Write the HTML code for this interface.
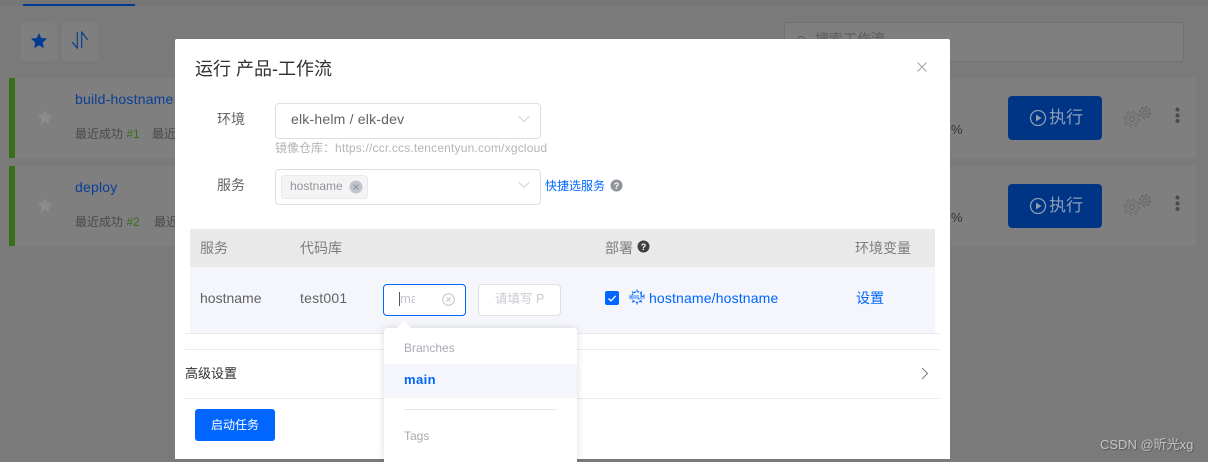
<!DOCTYPE html>
<html><head><meta charset="utf-8">
<style>
*{box-sizing:border-box}
html,body{margin:0;padding:0}
body{width:1208px;height:462px;overflow:hidden;position:relative;background:#7a7a7a;font-family:"Liberation Sans","Noto Sans CJK SC",sans-serif;font-size:14px}
.a{position:absolute;white-space:nowrap}
.card{position:absolute;left:9px;width:1187px;height:80px;background:#7f7f7f;border-left:6px solid #387018}
.btn{position:absolute;left:1008px;width:94px;height:44px;background:#003585;border-radius:4px;color:#8d9cb5;font-size:17px;line-height:44px}
.m{position:absolute;left:175px;top:39px;width:775px;height:420px;background:#fff;border-radius:2px 2px 0 0}
.in{position:absolute;background:#fff;border:1px solid #dcdfe6;border-radius:4px}
.g{color:#606266}
.blue{color:#0066ff}
</style></head><body>
<div class="a" style="left:0;top:0;width:1208px;height:6px;background:#767676"></div>
<div class="a" style="left:23px;top:4px;width:112px;height:2px;background:#003b93"></div>
<div class="a" style="left:21px;top:23px;width:36px;height:38px;background:#7f7f7f;border-radius:4px"></div>
<div class="a" style="left:62px;top:23px;width:36px;height:38px;background:#7f7f7f;border-radius:4px"></div>
<svg class="a" style="left:21px;top:23px" width="80" height="38"><path d="M18 10l2.200 5 5.800.6-4.300 3.900 1.200 5.700-4.900-3-4.900 3 1.200-5.700-4.300-3.900 5.800-.6z" fill="#003b93"/><path d="M51 19l5.300 6V9M60.700 25V9l6 8" fill="none" stroke="#003b93" stroke-width="1.100"/></svg>
<div class="a" style="left:784px;top:22px;width:400px;height:40px;border:1px solid #707070;border-radius:4px;background:#7f7f7f"></div>
<svg class="a" style="left:796px;top:34px" width="12" height="12"><circle cx="5" cy="6" r="3.500" fill="none" stroke="#5c5c5c"/></svg>
<div class="a" style="left:815px;top:29px;font-size:14px;color:#5c5c5c">搜索工作流</div>

<div class="card" style="top:78px"></div>
<div class="card" style="top:166px"></div>
<svg class="a" style="left:37px;top:110px" width="16" height="106"><path d="M8 0l2 5 5.500.5-4.200 3.600 1.300 5.400L8 11.600 3.400 14.500l1.300-5.400L.5 5.500 6 5z" fill="#8c8c8c"/><path transform="translate(0 88)" d="M8 0l2 5 5.500.5-4.200 3.600 1.300 5.400L8 11.600 3.400 14.500l1.300-5.400L.5 5.500 6 5z" fill="#8c8c8c"/></svg>
<div class="a" style="left:75px;top:91px;font-size:14px;letter-spacing:.2px;color:#0a3f95">build-hostname</div>
<div class="a" style="left:75px;top:179px;font-size:14px;letter-spacing:.2px;color:#0a3f95">deploy</div>
<div class="a" style="left:75px;top:125px;font-size:12px;color:#4a4a4a">最近成功 <span style="color:#387018">#1</span></div>
<div class="a" style="left:152px;top:125px;font-size:12px;color:#4a4a4a">最近</div>
<div class="a" style="left:75px;top:213px;font-size:12px;color:#4a4a4a">最近成功 <span style="color:#387018">#2</span></div>
<div class="a" style="left:154px;top:213px;font-size:12px;color:#4a4a4a">最近</div>
<div class="a" style="left:951px;top:122px;font-size:13px;color:#333">%</div>
<div class="a" style="left:951px;top:210px;font-size:13px;color:#333">%</div>

<div class="btn" style="top:96px"><svg style="position:absolute;left:21px;top:13px" width="18" height="18"><circle cx="9" cy="9" r="7.500" fill="none" stroke="#8d9cb5" stroke-width="1.300"/><path d="M7 5.500l5.500 3.500L7 12.500z" fill="#8d9cb5"/></svg><span style="position:absolute;left:41px">执行</span></div>
<div class="btn" style="top:184px"><svg style="position:absolute;left:21px;top:13px" width="18" height="18"><circle cx="9" cy="9" r="7.500" fill="none" stroke="#8d9cb5" stroke-width="1.300"/><path d="M7 5.500l5.500 3.500L7 12.500z" fill="#8d9cb5"/></svg><span style="position:absolute;left:41px">执行</span></div>

<svg class="a" style="left:1122px;top:105px" width="62" height="112" fill="none">
<g>
<circle cx="10" cy="14" r="6" stroke="#666" stroke-width="1.800"/><circle cx="10" cy="14" r="7.400" stroke="#666" stroke-width="2.400" stroke-dasharray="2.800 3"/><circle cx="10" cy="14" r="6" stroke="#7f7f7f" stroke-width="1"/><circle cx="10" cy="14" r="7.400" stroke="#7f7f7f" stroke-width="1.400" stroke-dasharray="1.800 3.990" stroke-dashoffset="-.5"/><circle cx="10" cy="14" r="2.600" stroke="#666"/>
<circle cx="23" cy="7.500" r="4" stroke="#666" stroke-width="1.600"/><circle cx="23" cy="7.500" r="5.200" stroke="#666" stroke-width="2" stroke-dasharray="2 2.080"/><circle cx="23" cy="7.500" r="4" stroke="#7f7f7f" stroke-width=".8"/><circle cx="23" cy="7.500" r="1.800" stroke="#666"/>
</g>
<g transform="translate(0 88)">
<circle cx="10" cy="14" r="6" stroke="#666" stroke-width="1.800"/><circle cx="10" cy="14" r="7.400" stroke="#666" stroke-width="2.400" stroke-dasharray="2.800 3"/><circle cx="10" cy="14" r="6" stroke="#7f7f7f" stroke-width="1"/><circle cx="10" cy="14" r="7.400" stroke="#7f7f7f" stroke-width="1.400" stroke-dasharray="1.800 3.990" stroke-dashoffset="-.5"/><circle cx="10" cy="14" r="2.600" stroke="#666"/>
<circle cx="23" cy="7.500" r="4" stroke="#666" stroke-width="1.600"/><circle cx="23" cy="7.500" r="5.200" stroke="#666" stroke-width="2" stroke-dasharray="2 2.080"/><circle cx="23" cy="7.500" r="4" stroke="#7f7f7f" stroke-width=".8"/><circle cx="23" cy="7.500" r="1.800" stroke="#666"/>
</g>
<g fill="#4a4a4a" stroke="none"><circle cx="55.500" cy="4.500" r="2"/><circle cx="55.500" cy="10.500" r="2"/><circle cx="55.500" cy="16" r="2"/><circle cx="55.500" cy="92.500" r="2"/><circle cx="55.500" cy="98.500" r="2"/><circle cx="55.500" cy="104" r="2"/></g>
</svg>

<div class="m"></div>
<div class="a" style="left:195px;top:56px;font-size:18px;color:#303133;line-height:26px">运行 产品-工作流</div>
<svg class="a" style="left:917px;top:62px" width="10" height="10"><path d="M.5.500l9 9M9.500.500l-9 9" stroke="#a0a3a9" fill="none"/></svg>

<div class="a g" style="left:217px;top:109px;line-height:20px">环境</div>
<div class="in" style="left:275px;top:103px;width:266px;height:36px"></div>
<div class="a" style="left:291px;top:110px;font-size:14px;letter-spacing:.2px;line-height:18px;color:#606266">elk-helm / elk-dev</div>
<svg class="a" style="left:518px;top:115px" width="12" height="8"><path d="M.5 1l5.500 5.500L11.500 1" fill="none" stroke="#d0d3d9"/></svg>
<div class="a" style="left:275px;top:139px;font-size:12px;line-height:18px;color:#b4b4b4">镜像仓库：<span style="letter-spacing:.18px">https://ccr.ccs.tencentyun.com/xgcloud</span></div>

<div class="a g" style="left:217px;top:175px;line-height:20px">服务</div>
<div class="in" style="left:275px;top:169px;width:266px;height:36px"></div>
<div class="a" style="left:281px;top:175px;width:87px;height:24px;background:#f4f4f5;border:1px solid #e9e9eb;border-radius:4px"></div>
<div class="a" style="left:290px;top:178px;font-size:12px;line-height:16px;color:#909399">hostname</div>
<svg class="a" style="left:349px;top:180px" width="14" height="14"><circle cx="7" cy="7" r="6.500" fill="#c0c4cc"/><path d="M4.500 4.500l5 5M9.500 4.500l-5 5" stroke="#909399"/></svg>
<svg class="a" style="left:518px;top:181px" width="12" height="8"><path d="M.5 1l5.500 5.500L11.500 1" fill="none" stroke="#d0d3d9"/></svg>
<div class="a blue" style="left:545px;top:177px;font-size:12px;line-height:18px">快捷选服务</div>
<svg class="a" style="left:610px;top:179px" width="13" height="13"><circle cx="6.500" cy="6.500" r="6" fill="#909399"/><text x="6.500" y="10" font-size="9" font-weight="bold" text-anchor="middle" fill="#fff" font-family="Liberation Sans">?</text></svg>

<div class="a" style="left:190px;top:229px;width:745px;height:38px;background:#e9e9e9"></div>
<div class="a" style="left:190px;top:267px;width:745px;height:66px;background:#f5f6fb"></div>
<div class="a" style="left:200px;top:238px;line-height:20px;color:#7d7d7d">服务</div>
<div class="a" style="left:300px;top:238px;line-height:20px;color:#7d7d7d">代码库</div>
<div class="a" style="left:605px;top:238px;line-height:20px;color:#7d7d7d">部署</div>
<svg class="a" style="left:637px;top:240px" width="13" height="13"><circle cx="6.500" cy="6.500" r="6" fill="#404040"/><text x="6.500" y="10" font-size="9" font-weight="bold" text-anchor="middle" fill="#fff" font-family="Liberation Sans">?</text></svg>
<div class="a" style="left:855px;top:238px;line-height:20px;color:#7d7d7d">环境变量</div>

<div class="a" style="left:200px;top:289px;font-size:14px;line-height:18px;color:#606266">hostname</div>
<div class="a" style="left:300px;top:289px;font-size:14px;letter-spacing:.2px;line-height:18px;color:#606266">test001</div>
<div class="a" style="left:383px;top:284px;width:83px;height:32px;background:#fff;border:1px solid #0066ff;border-radius:4px"></div>
<div class="a" style="left:399px;top:292px;width:1px;height:14px;background:#555"></div>
<div class="a" style="left:400px;top:291px;width:15px;overflow:hidden;font-size:13px;line-height:16px;color:#c0c4cc">ma</div>
<svg class="a" style="left:442px;top:293px" width="13" height="13"><circle cx="6.500" cy="6.500" r="5.800" fill="none" stroke="#c0c4cc"/><path d="M4.500 4.500l4 4M8.500 4.500l-4 4" stroke="#c0c4cc"/></svg>
<div class="a" style="left:478px;top:284px;width:83px;height:32px;background:#fff;border:1px solid #dcdfe6;border-radius:4px"></div>
<div class="a" style="left:495px;top:291px;font-size:12.500px;line-height:16px;color:#c8cad0">请填写 P</div>

<div class="a" style="left:605px;top:291px;width:14px;height:14px;background:#0066ff;border-radius:2px"></div>
<svg class="a" style="left:605px;top:291px" width="14" height="14"><path d="M3.500 7.500l2.500 2.300 4.700-5" fill="none" stroke="#fff" stroke-width="1.300"/></svg>
<svg class="a" style="left:629px;top:289px" width="16" height="16"><circle cx="8" cy="8" r="5.300" fill="none" stroke="#0066ff" stroke-width="1.200" stroke-dasharray="2.500 1"/><path d="M8 .5v2.500M8 13v2.500M3 2.500l1.500 1.500M13 2.500L11.500 4M3 13.500L4.500 12M13 13.500L11.500 12" stroke="#0066ff"/><rect x="0" y="6" width="16" height="4" fill="#f5f6fb"/><path d="M1 6v4M3 6v4M1 8h2M5 6v4M7 6v4M9 6v4h2M12 10V6l1.500 2L15 6v4" stroke="#0066ff" stroke-width=".8" fill="none"/></svg>
<div class="a blue" style="left:649px;top:289px;font-size:14px;line-height:18px;letter-spacing:.15px">hostname/hostname</div>
<div class="a blue" style="left:856px;top:288px;line-height:20px">设置</div>

<div class="a" style="left:185px;top:333px;width:755px;height:1px;background:#e9ebf0"></div>
<div class="a" style="left:185px;top:349px;width:755px;height:1px;background:#e9ebf0"></div>
<div class="a" style="left:185px;top:364px;font-size:13px;line-height:20px;color:#303133">高级设置</div>
<svg class="a" style="left:921px;top:367px" width="8" height="13"><path d="M1 1l5.500 5.500L1 12" fill="none" stroke="#777"/></svg>
<div class="a" style="left:185px;top:398px;width:755px;height:1px;background:#e9ebf0"></div>
<div class="a" style="left:195px;top:409px;width:80px;height:32px;background:#0066ff;border-radius:3px;color:#fff;font-size:12px;line-height:32px;text-align:center">启动任务</div>

<div class="a" style="left:384px;top:328px;width:193px;height:134px;background:#fff;border-radius:3px 3px 0 0;box-shadow:0 0 8px rgba(0,0,0,.14)"></div>
<div class="a" style="left:399px;top:323px;width:10px;height:10px;background:#fff;transform:rotate(45deg)"></div>
<div class="a" style="left:404px;top:341px;font-size:12px;line-height:14px;color:#a9abb2">Branches</div>
<div class="a" style="left:384px;top:364px;width:193px;height:34px;background:#f5f6fb"></div>
<div class="a" style="left:404px;top:372px;font-size:13px;letter-spacing:.4px;line-height:16px;font-weight:bold;color:#0066ff">main</div>
<div class="a" style="left:404px;top:409px;width:153px;height:1px;background:#e4e7ed"></div>
<div class="a" style="left:404px;top:429px;font-size:12px;line-height:14px;color:#a9abb2">Tags</div>

<div class="a" style="left:1100px;top:436px;font-size:13px;line-height:17px;color:#c4c4c4;text-shadow:1px 1px 1px #555">CSDN @昕光xg</div>
</body></html>
